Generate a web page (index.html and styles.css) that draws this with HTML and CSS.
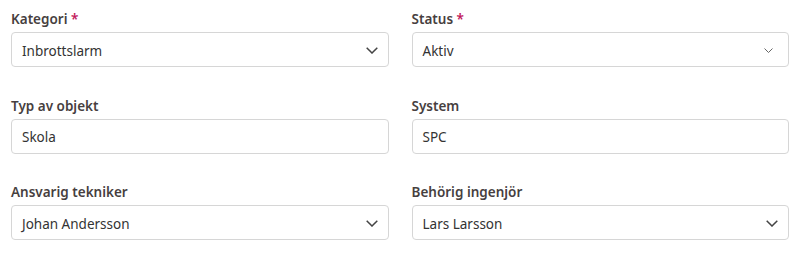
FILE: index.html
```html
<!DOCTYPE html>
<html lang="sv">
<head>
  <meta charset="UTF-8" />
  <title>Objekt</title>
  <link rel="stylesheet" href="styles.css">
</head>
<body>
  <form class="form-grid">
    <div class="field">
      <label>Kategori <span class="req">*</span></label>
      <div class="control">
        <span>Inbrottslarm</span>
        <svg class="chev" width="12" height="7" viewBox="0 0 12 7"><polyline points="0.7,0.7 6,6 11.3,0.7" /></svg>
      </div>
    </div>
    <div class="field">
      <label>Status <span class="req">*</span></label>
      <div class="control native">
        <span>Aktiv</span>
        <svg class="chev small" width="9" height="5" viewBox="0 0 9 5"><polyline points="0.5,0.5 4.5,4.5 8.5,0.5" /></svg>
      </div>
    </div>

    <div class="field">
      <label>Typ av objekt</label>
      <div class="control"><span>Skola</span></div>
    </div>
    <div class="field">
      <label>System</label>
      <div class="control"><span>SPC</span></div>
    </div>

    <div class="field">
      <label>Ansvarig tekniker</label>
      <div class="control">
        <span>Johan Andersson</span>
        <svg class="chev" width="12" height="7" viewBox="0 0 12 7"><polyline points="0.7,0.7 6,6 11.3,0.7" /></svg>
      </div>
    </div>
    <div class="field">
      <label>Behörig ingenjör</label>
      <div class="control">
        <span>Lars Larsson</span>
        <svg class="chev" width="12" height="7" viewBox="0 0 12 7"><polyline points="0.7,0.7 6,6 11.3,0.7" /></svg>
      </div>
    </div>
  </form>
</body>
</html>
```

FILE: styles.css
```css
body {
  margin: 0;
  background: #ffffff;
  font-family: "Noto Sans", "Open Sans", sans-serif;
  font-size: 13.5px;
  color: #333;
}

.form-grid {
  display: grid;
  grid-template-columns: 1fr 1fr;
  column-gap: 23px;
  row-gap: 28.5px;
  padding: 9px 13px 0 11px;
}

.field label {
  display: block;
  height: 20px;
  line-height: 20px;
  margin-bottom: 3px;
  font-weight: 600;
  color: #473f3f;
}

.req {
  color: #c2185b;
}

.control {
  height: 35px;
  box-sizing: border-box;
  border: 1px solid #d6d6d6;
  border-radius: 4px;
  padding: 2px 10px 0 10px;
  display: flex;
  align-items: center;
  justify-content: space-between;
  color: #333;
}

.chev polyline {
  fill: none;
  stroke: #444;
  stroke-width: 1.5;
}

.native {
  padding-right: 15px;
}

.chev.small polyline {
  stroke: #666;
  stroke-width: 1;
}
```
